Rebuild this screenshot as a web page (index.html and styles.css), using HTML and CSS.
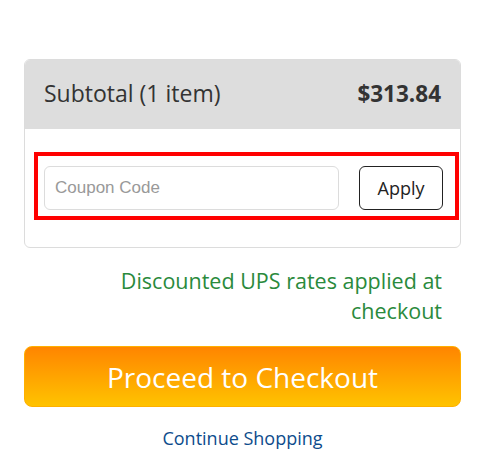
FILE: index.html
```html
<!DOCTYPE html>
<html>
<head>
<meta charset="utf-8">
<link rel="stylesheet" href="styles.css">
</head>
<body>
<div class="wrap">
  <div class="card">
    <div class="card-head">
      <span class="label">Subtotal (1 item)</span>
      <span class="price">$313.84</span>
    </div>
    <div class="card-body">
      <div class="coupon">
        <input class="coupon-input" type="text" placeholder="Coupon Code">
        <button class="apply">Apply</button>
      </div>
    </div>
  </div>
  <p class="note">Discounted UPS rates applied at checkout</p>
  <button class="checkout">Proceed to Checkout</button>
  <a class="continue" href="#">Continue Shopping</a>
</div>
</body>
</html>
```
FILE: styles.css
```css
* { box-sizing: border-box; }
body {
  margin: 0;
  background: #fff;
  font-family: "Open Sans", "Liberation Sans", sans-serif;
}
.wrap {
  width: 437px;
  margin: 59px 0 0 24px;
  display: flex;
  flex-direction: column;
}
.card {
  border: 1px solid #dcdcdc;
  border-radius: 6px;
  overflow: visible;
}
.card-head {
  background: #dddddd;
  height: 69px;
  border-radius: 5px 5px 0 0;
  display: flex;
  align-items: center;
  justify-content: space-between;
  padding: 0 19px 3px 19px;
  color: #333;
  font-size: 23px;
}
.price { font-weight: 700; font-size: 22.5px; }
.card-body {
  padding: 23px 0 27px 9px;
}
.coupon {
  border: 4px solid #ff0000;
  width: 425px;
  height: 68px;
  padding: 10px 12px 6px 6px;
  display: flex;
  justify-content: space-between;
}
.coupon-input {
  width: 295px;
  height: 44px;
  border: 1px solid #dcdcdc;
  border-radius: 6px;
  padding: 0 10px;
  font-family: "Liberation Sans", Arial, sans-serif;
  font-size: 17px;
  color: #333;
  outline: none;
}
.coupon-input::placeholder { color: #999; }
.apply {
  width: 84px;
  height: 44px;
  border: 1px solid #222;
  border-radius: 6px;
  background: #fff;
  font-family: "Open Sans", sans-serif;
  font-size: 18px;
  color: #222;
  padding: 0;
}
.note {
  margin: 18px 19px 0 60px;
  text-align: right;
  color: #2a8a3c;
  font-size: 21.5px;
  line-height: 30px;
}
.checkout {
  margin-top: 20px;
  height: 61px;
  border: 1px solid #ffb000;
  border-radius: 8px;
  background: linear-gradient(#ff8500, #ffc300);
  color: #fff;
  font-family: "Open Sans", sans-serif;
  font-size: 28px;
  padding: 0;
}
.continue {
  align-self: center;
  margin-top: 19px;
  color: #0d4c8c;
  text-decoration: none;
  font-size: 18px;
  line-height: 24px;
}
```
